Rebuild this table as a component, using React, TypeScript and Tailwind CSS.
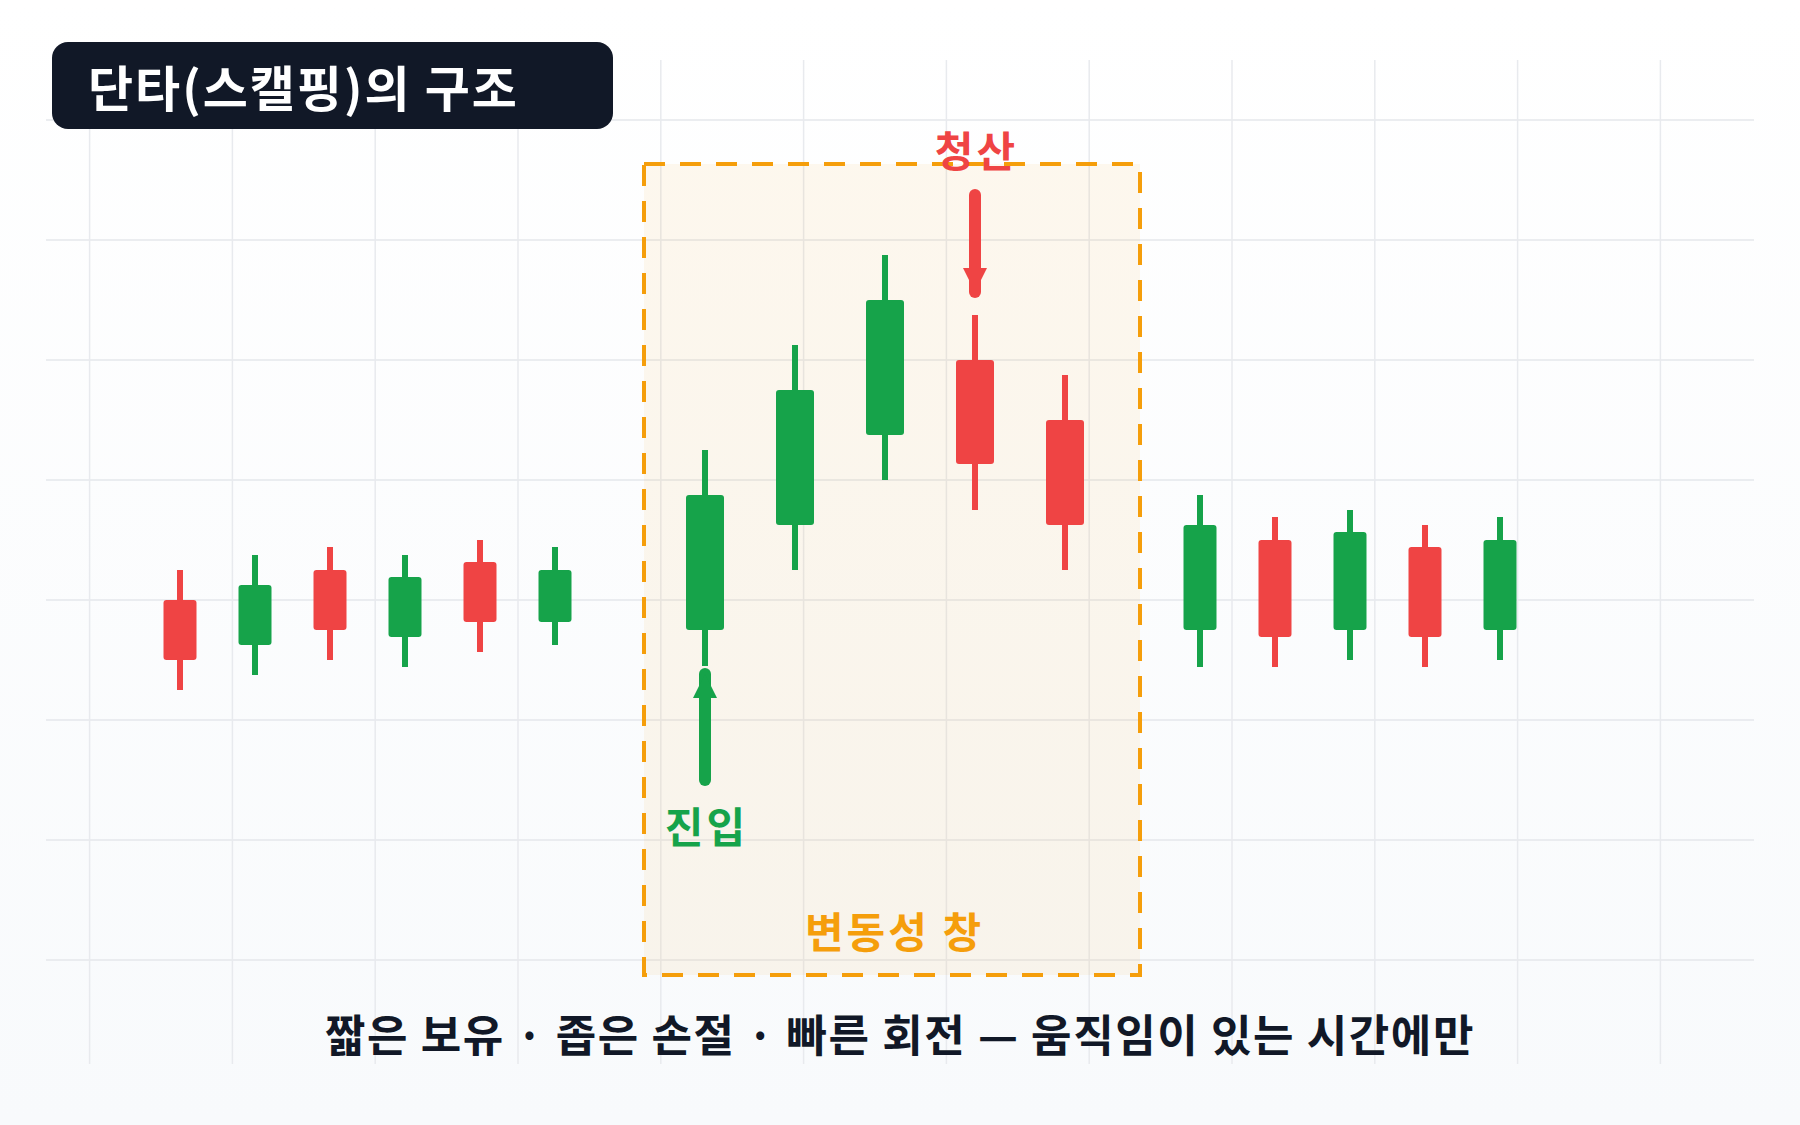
import React from 'react'

type Candle = { x: number; hi: number; lo: number; top: number; bottom: number; up: boolean; w: number }

const GREEN = '#16a34a'
const RED = '#ef4444'
const AMBER = '#f59e0b'

const candles: Candle[] = [
    // 횡보 구간
    { x: 180, hi: 570, lo: 690, top: 600, bottom: 660, up: false, w: 33 },
    { x: 255, hi: 555, lo: 675, top: 585, bottom: 645, up: true, w: 33 },
    { x: 330, hi: 547, lo: 660, top: 570, bottom: 630, up: false, w: 33 },
    { x: 405, hi: 555, lo: 667, top: 577, bottom: 637, up: true, w: 33 },
    { x: 480, hi: 540, lo: 652, top: 562, bottom: 622, up: false, w: 33 },
    { x: 555, hi: 547, lo: 645, top: 570, bottom: 622, up: true, w: 33 },
    // 변동성 창
    { x: 705, hi: 450, lo: 666, top: 495, bottom: 630, up: true, w: 38 },
    { x: 795, hi: 345, lo: 570, top: 390, bottom: 525, up: true, w: 38 },
    { x: 885, hi: 255, lo: 480, top: 300, bottom: 435, up: true, w: 38 },
    { x: 975, hi: 315, lo: 510, top: 360, bottom: 464, up: false, w: 38 },
    { x: 1065, hi: 375, lo: 570, top: 420, bottom: 525, up: false, w: 38 },
    // 이후
    { x: 1200, hi: 495, lo: 667, top: 525, bottom: 630, up: true, w: 33 },
    { x: 1275, hi: 517, lo: 667, top: 540, bottom: 637, up: false, w: 33 },
    { x: 1350, hi: 510, lo: 660, top: 532, bottom: 630, up: true, w: 33 },
    { x: 1425, hi: 525, lo: 667, top: 547, bottom: 637, up: false, w: 33 },
    { x: 1500, hi: 517, lo: 660, top: 540, bottom: 630, up: true, w: 33 },
]

const rows = [120, 240, 360, 480, 600, 720, 840, 960]
const cols = Array.from({ length: 12 }, (_, i) => 89.6 + i * 142.8)

const labelFont = '"Noto Sans CJK KR", "Noto Sans", sans-serif'

const Label = ({ x, y, color, children }: { x: number; y: number; color: string; children: string }) => (
    <text
        x={x + 1.5}
        y={y}
        textAnchor="middle"
        dominantBaseline="central"
        fill={color}
        fontSize={42}
        fontWeight={700}
        letterSpacing={3}
        fontFamily={labelFont}
    >
        {children}
    </text>
)

const Chart = () => (
    <svg className="absolute inset-0" width={1800} height={1125} viewBox="0 0 1800 1125">
        {/* grid */}
        {rows.map((y) => (
            <line key={'r' + y} x1={46} x2={1754} y1={y} y2={y} stroke="#e5e7eb" strokeWidth={1.5} />
        ))}
        {cols.map((x) => (
            <line key={'c' + x} x1={x} x2={x} y1={60} y2={1064} stroke="#e8eaee" strokeWidth={1.5} />
        ))}

        {/* 변동성 창 */}
        <rect x={644} y={164} width={496} height={811} fill={AMBER} fillOpacity={0.07} />
        <rect x={644} y={164} width={496} height={811} fill="none" stroke={AMBER} strokeWidth={4} strokeDasharray="21 15" />

        {candles.map((c, i) => {
            const color = c.up ? GREEN : RED
            return (
                <g key={i}>
                    <line x1={c.x} x2={c.x} y1={c.hi} y2={c.lo} stroke={color} strokeWidth={6} />
                    <rect x={c.x - c.w / 2} y={c.top} width={c.w} height={c.bottom - c.top} rx={3} fill={color} />
                </g>
            )
        })}

        {/* 진입 화살표 */}
        <line x1={705} x2={705} y1={780} y2={674} stroke={GREEN} strokeWidth={12} strokeLinecap="round" />
        <polygon points="693,698 717,698 705,674" fill={GREEN} />
        {/* 청산 화살표 */}
        <line x1={975} x2={975} y1={195} y2={292} stroke={RED} strokeWidth={12} strokeLinecap="round" />
        <polygon points="963,268 987,268 975,292" fill={RED} />

        <Label x={975} y={148} color={RED}>청산</Label>
        <Label x={705} y={824} color={GREEN}>진입</Label>
        <Label x={893} y={929} color={AMBER}>변동성 창</Label>
    </svg>
)

export default function App() {
    return (
        <div className="relative w-full h-[1125px] overflow-hidden bg-gradient-to-b from-white to-[#f8fafc] font-['Noto_Sans_CJK_KR','Noto_Sans',sans-serif]">
            <Chart />
            <div className="relative flex flex-col h-full">
                <div className="ml-[52px] mt-[42px] w-[561px] h-[87px] rounded-2xl bg-[#111827] flex items-center pl-[36px]">
                    <h1 className="text-white text-[49px] font-bold leading-none tracking-[2px]">단타(스캘핑)의 구조</h1>
                </div>
                <p className="mt-auto mb-[62px] h-[60px] flex items-center justify-center text-[44px] font-bold text-[#111827] leading-none tracking-[1.6px]">
                    짧은 보유 · 좁은 손절 · 빠른 회전 — 움직임이 있는 시간에만
                </p>
            </div>
        </div>
    )
}
